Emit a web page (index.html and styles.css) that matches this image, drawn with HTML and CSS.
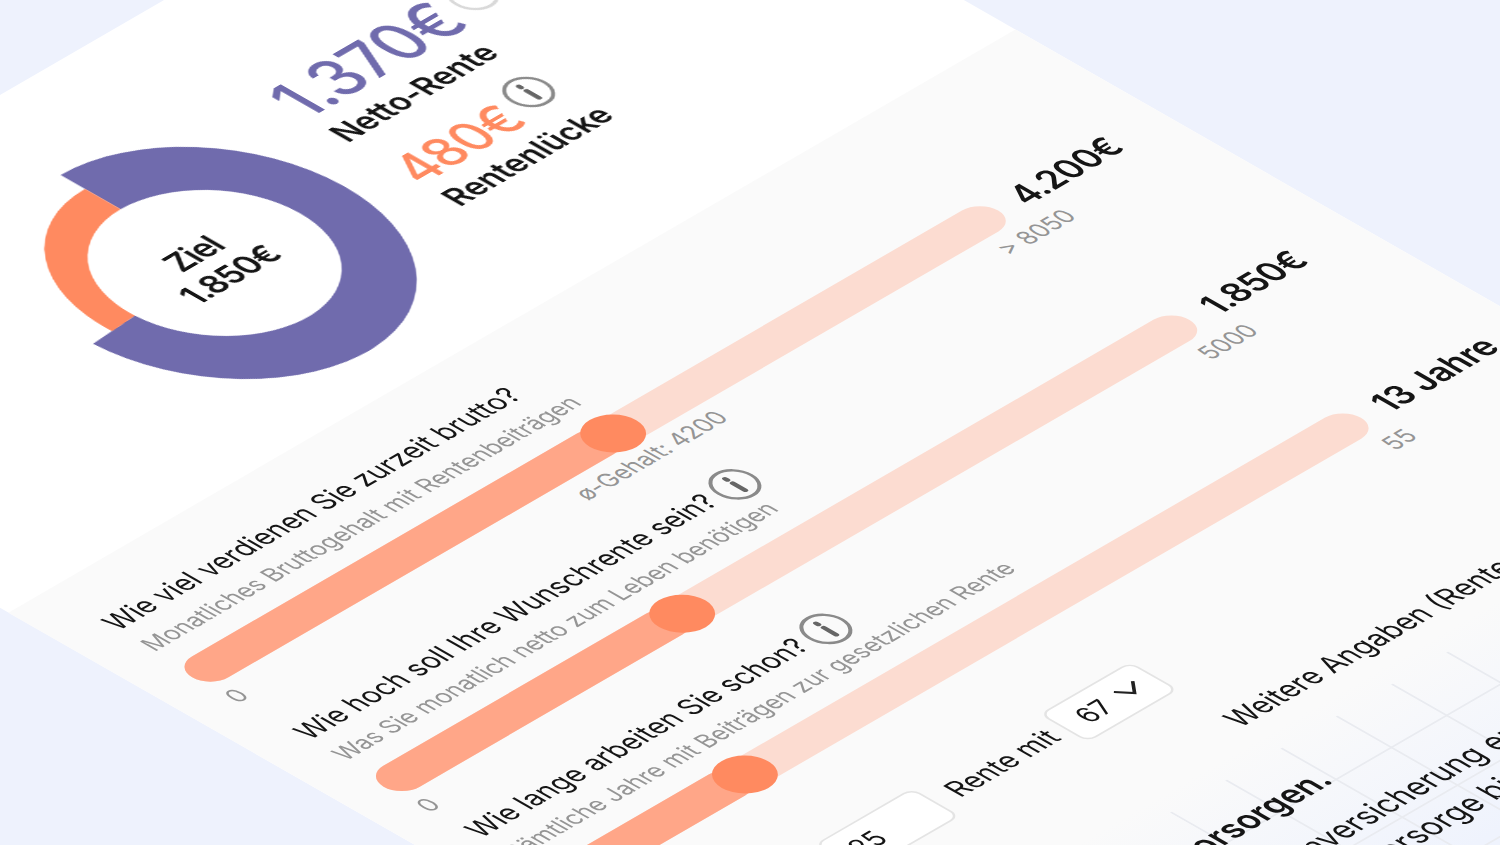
FILE: index.html
```html
<!DOCTYPE html>
<html lang="de">
<head>
  <meta charset="UTF-8">
  <title>Rentenrechner</title>
  <link rel="stylesheet" href="styles.css">
</head>
<body>
  <div class="scene">
    <div class="card">
      <div class="head">
        <div class="donut">
          <svg class="donut-svg" viewBox="0 0 330 330">
            <path fill="#706bad" d="M165 -12A153 177 0 1 1 12.300 175.500L65.200 171.400A100 108 0 1 0 165 57Z"/>
            <path fill="#ff8a60" d="M36.200 173.800A129 149 0 0 1 165 16V57A100 108 0 0 0 65.200 171.400Z"/>
          </svg>
          <div class="donut-label">Ziel<br>1.850€</div>
        </div>
        <div class="stats">
          <div class="stat-line">
            <span class="stat-big">1.370€</span>
            <svg class="info info-faint" viewBox="0 0 40 40"><circle cx="20" cy="20" r="18"/></svg>
          </div>
          <div class="stat-label stat-label-first">Netto-Rente</div>
          <div class="stat-line stat-second">
            <span class="stat-mid">480€</span>
            <svg class="info" viewBox="0 0 40 40"><circle cx="20" cy="20" r="18"/><path d="M20 18V30M20 10.500V12.500"/></svg>
          </div>
          <div class="stat-label">Rentenlücke</div>
        </div>
      </div>

      <div class="body">
        <div class="row row-first">
          <div class="question">Wie viel verdienen Sie zurzeit brutto?</div>
          <div class="hint">Monatliches Bruttogehalt mit Rentenbeiträgen</div>
          <div class="slider">
            <div class="track">
              <div class="fill" style="width: 52.2%"></div>
              <div class="thumb" style="left: 52.2%"></div>
              <span class="tick tick-min">0</span>
              <span class="tick tick-mid" style="left: 52.2%">ø-Gehalt: 4200</span>
              <span class="tick tick-max">&gt; 8050</span>
            </div>
            <div class="value">4.200€</div>
          </div>
        </div>

        <div class="row row-second">
          <div class="question">Wie hoch soll Ihre Wunschrente sein?
            <svg class="info" viewBox="0 0 40 40"><circle cx="20" cy="20" r="18"/><path d="M20 18V30M20 10.500V12.500"/></svg>
          </div>
          <div class="hint">Was Sie monatlich netto zum Leben benötigen</div>
          <div class="slider">
            <div class="track">
              <div class="fill" style="width: 37%"></div>
              <div class="thumb" style="left: 37%"></div>
              <span class="tick tick-min">0</span>
              <span class="tick tick-max">5000</span>
            </div>
            <div class="value">1.850€</div>
          </div>
        </div>

        <div class="row">
          <div class="question">Wie lange arbeiten Sie schon?
            <svg class="info" viewBox="0 0 40 40"><circle cx="20" cy="20" r="18"/><path d="M20 18V30M20 10.500V12.500"/></svg>
          </div>
          <div class="hint">Sämtliche Jahre mit Beiträgen zur gesetzlichen Rente</div>
          <div class="slider">
            <div class="track">
              <div class="fill" style="width: 23.6%"></div>
              <div class="thumb" style="left: 23.6%"></div>
              <span class="tick tick-max">55</span>
            </div>
            <div class="value">13 Jahre</div>
          </div>
        </div>

        <div class="ages">
          <div class="select select-wide"><span class="select-text">25</span></div>
          <span class="age-label">Rente mit</span>
          <div class="select"><span class="select-text">67</span>
            <svg class="chevron" viewBox="0 0 24 24"><path d="M1 5L12 18L23 5"/></svg>
          </div>
        </div>

        <div class="more">Weitere Angaben (Rentenpunkte)</div>

        <div class="table">
          <div class="table-text">
            <p class="table-title">Gut vorsorgen.</p>
            <p>Ihre Rentenversicherung erfasst</p>
            <p>Keine Altersvorsorge bisher</p>
          </div>
        </div>
      </div>
    </div>
  </div>
</body>
</html>
```

FILE: styles.css
```css
html, body { margin: 0; height: 100%; }
body { font-family: Inter, "Noto Sans", sans-serif; color: #151515; }

.scene { position: relative; width: 1500px; height: 845px; overflow: hidden; background-color: #eef2fd; }
.card {
  position: absolute;
  left: 0;
  top: 0;
  width: 1177px;
  height: 1800px;
  background-color: #fff;
  transform-origin: 0 0;
  transform: matrix(0.8556, -0.4955, 0.87, 0.497, -445.8, 353.2);
}

/* the source mock is tilted a little taller than the card, so the type is stretched to match */
.donut-label, .stat-line, .stat-label, .question, .hint, .value, .age-label, .select-text, .more, .table-text p { transform: scaleY(1.12); }

.head { display: flex; align-items: flex-start; height: 522px; box-sizing: border-box; padding: 115px 0 0 310px; filter: blur(0.5px); }
.donut { position: relative; width: 330px; height: 330px; margin-top: 12px; flex: none; }
.donut-svg { display: block; width: 100%; height: 100%; overflow: visible; }
.donut-label { position: absolute; inset: 0; display: flex; align-items: center; justify-content: center; padding-right: 6px; text-align: center; font-size: 32px; line-height: 38px; font-weight: 600; letter-spacing: -1px; }

.stats { margin: 32px 0 0 34px; }
.stat-line { display: flex; align-items: flex-end; }
.stat-line .info { margin: 0 0 14px 10px; }
.stat-second { height: 50px; margin-top: 36px; }
.stat-big { font-size: 62px; line-height: 1; font-weight: 500; color: #706bad; letter-spacing: -1px; }
.stat-mid { font-size: 50px; line-height: 1; font-weight: 500; color: #ff8a60; letter-spacing: -1px; }
.stat-label { margin-top: 12px; font-size: 30.500px; line-height: 1; font-weight: 600; }
.stat-label-first { margin-top: 13px; }

.info { width: 42px; height: 42px; flex: none; fill: none; stroke: #8a8a8a; stroke-width: 3; stroke-linecap: round; }
.info path { stroke: #666; stroke-width: 4.500; }
.info-faint { stroke: #d9d9d9; }

.body { height: 1278px; box-sizing: border-box; padding: 23px 0 0 41px; background: linear-gradient(to bottom, #fafafa 850px, #eff3fd 1080px); }
.row { padding-top: 35px; }
.row-first { margin-bottom: 51px; }
.row-second { margin-bottom: 28px; }

.question { display: flex; align-items: center; gap: 7px; height: 30px; margin-left: 4px; font-size: 27px; line-height: 30px; white-space: nowrap; transform-origin: 0 70%; }
.hint { margin: 12px 0 0 4px; font-size: 23.200px; line-height: 30px; color: #959595; white-space: nowrap; }

.slider { display: flex; align-items: center; gap: 22px; margin-top: 20px; }
.track { position: relative; width: 942px; height: 42px; border-radius: 21px; background-color: #fcdcd1; flex: none; }
.fill { height: 100%; border-radius: 21px; background-color: #ffa688; }
.thumb { position: absolute; top: 50%; width: 54px; height: 54px; border-radius: 50%; background-color: #ff8a60; transform: translate(-50%, -50%); }
.tick { position: absolute; top: 50px; font-size: 23px; line-height: 30px; color: #959595; white-space: nowrap; transform: scaleY(1.12); }
.tick-min { left: 0; }
.tick-mid { transform: translateX(-50%) scaleY(1.12); }
.tick-max { left: 100%; transform: translateX(-50%) scaleY(1.12); }
.value { margin-bottom: 2px; font-size: 33px; line-height: 30px; font-weight: 600; letter-spacing: -0.5px; white-space: nowrap; }

.ages { display: flex; align-items: center; gap: 18px; margin: 89px 0 0 191px; }
.age-label { margin-right: -7px; font-size: 27px; line-height: 30px; white-space: nowrap; }
.select { display: flex; align-items: center; gap: 15px; box-sizing: border-box; width: 106px; height: 56px; padding-left: 18px; border: 2px solid #e4e4e4; border-radius: 10px; background-color: #fff; font-size: 26px; flex: none; }
.select-wide { width: 114px; padding-left: 15px; }
.chevron { width: 24px; height: 24px; fill: none; stroke: #222; stroke-width: 3; }

.more { margin: 48px 0 0 557px; font-size: 28px; line-height: 30px; white-space: nowrap; transform-origin: 0 50%; }

.table {
  margin: 40px 0 0 430px;
  height: 430px;
  background-image: linear-gradient(to right, #e9ebf0 2px, transparent 2px), linear-gradient(to bottom, #e9ebf0 2px, transparent 2px);
  background-size: 64.6px 76px;
  background-position: 0 0, 0 62px;
}
.table-text { padding-top: 32px; margin-left: -104px; font-size: 30px; line-height: 48px; white-space: nowrap; }
.table-text p { margin: 0; }
.table-text .table-title { margin-bottom: 20px; font-size: 32px; line-height: 40px; font-weight: 600; }
```
